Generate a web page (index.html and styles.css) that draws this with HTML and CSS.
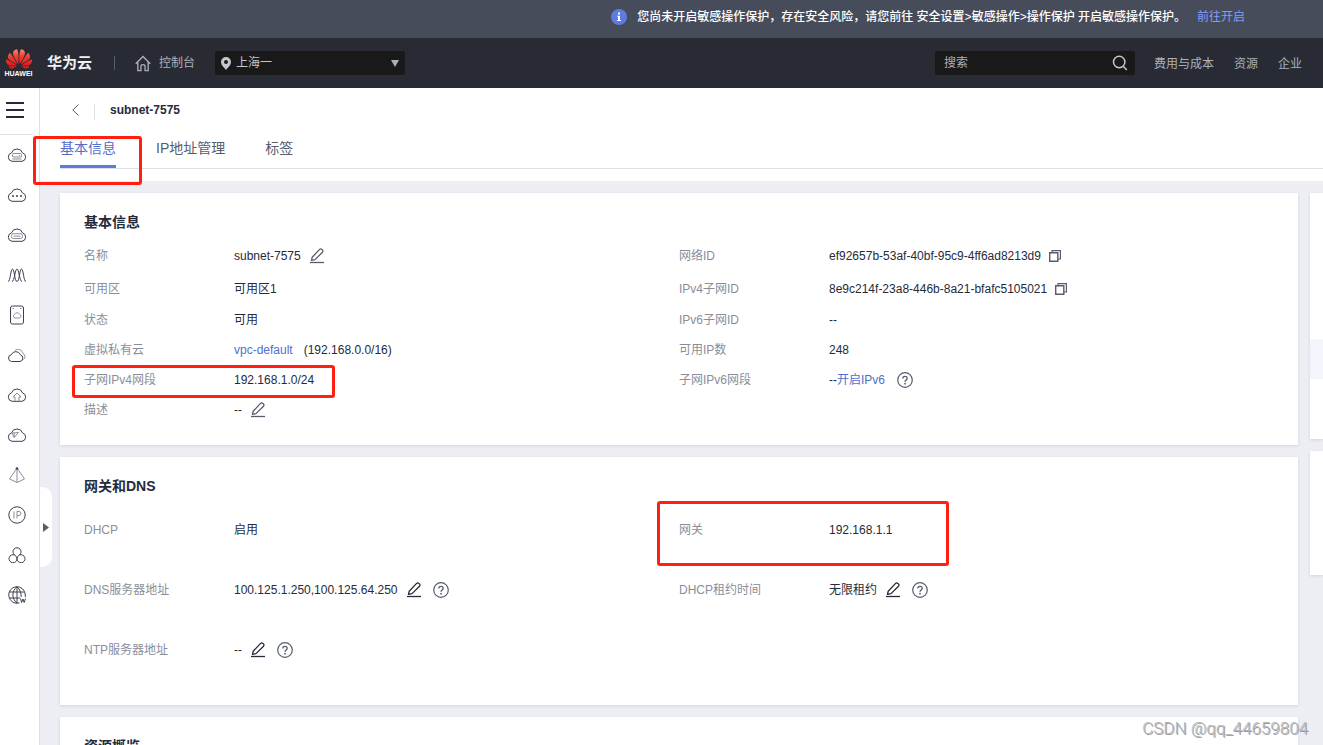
FILE: index.html
```html
<!DOCTYPE html>
<html lang="zh-CN">
<head>
<meta charset="utf-8">
<title>subnet-7575</title>
<link rel="stylesheet" href="styles.css">
</head>
<body>
<svg class="sprite" aria-hidden="true">
  <symbol id="pencil" viewBox="0 0 14 16"><path d="M1.5 12.3 2.2 9.2 9.6 1.4Q10.7.4 11.9 1.4L12.4 1.9Q13.5 3 12.5 4.2L5 11.6Z" fill="none" stroke="currentColor" stroke-width="1.3" stroke-linejoin="round"/><path d="M0 14.5H14" stroke="currentColor" stroke-width="1.3"/></symbol>
  <symbol id="help" viewBox="0 0 16 16"><circle cx="8" cy="8" r="7.3" fill="none" stroke="currentColor" stroke-width="1.2"/><path d="M5.8 6.6C5.8 3.6 10.2 3.7 10.2 6.3 10.2 8 8 8 8 9.8" fill="none" stroke="currentColor" stroke-width="1.3"/><circle cx="8" cy="11.7" r=".9" fill="currentColor"/></symbol>
  <symbol id="copy" viewBox="0 0 12 12"><path d="M.7 2.7H8.8V11.2H.7Z" fill="none" stroke="currentColor" stroke-width="1.4"/><path d="M3 2.500V.7H11.400V9H9" fill="none" stroke="currentColor" stroke-width="1.2"/></symbol>
  <symbol id="cloud" viewBox="0 0 20 16"><path d="M5 14.300H15A4.300 4.300 0 0 0 15.500 5.900 5.800 5.800 0 0 0 4.500 5.900 4.300 4.300 0 0 0 5 14.300Z"/></symbol>
</svg>

<div class="banner" role="status">
  <svg class="banner-icon" viewBox="0 0 16 16" aria-hidden="true"><circle cx="8" cy="8" r="8" fill="#5e7ce0"/><path d="M7 3.5h2v2H7zM6.2 6.7H9V11h1v1H6v-1h1V7.7h-.8z" fill="#fff"/></svg>
  <span>您尚未开启敏感操作保护，存在安全风险，请您前往 安全设置&gt;敏感操作&gt;操作保护 开启敏感操作保护。</span>
  <a class="banner-link" href="#">前往开启</a>
</div>

<header class="topbar">
  <a class="logo" href="#" aria-label="华为云">
    <span class="logo-mark">
      <svg class="logo-flower" viewBox="0 2.9 24 18.2" aria-hidden="true"><defs><linearGradient id="petal" x1="0" y1="0" x2="0" y2="1"><stop offset="0" stop-color="#f58a68"/><stop offset=".4" stop-color="#ee3a30"/><stop offset="1" stop-color="#cf1820"/></linearGradient></defs><path fill="url(#petal)" d="M3.67 6.14S1.82 7.91 1.72 9.78v.35c.08 1.51 1.22 2.4 1.22 2.4 1.83 1.79 6.26 4.04 7.3 4.55 0 0 .06.03.1-.01l.02-.04v-.04C7.52 10.8 3.67 6.14 3.67 6.14zM9.65 18.6c-.02-.08-.1-.08-.1-.08l-7.38.26c.8 1.43 2.15 2.53 3.56 2.2.96-.25 3.16-1.78 3.88-2.3.06-.05.04-.09.04-.09zm.08-.78C6.49 15.63.21 12.28.21 12.28c-.15.46-.2.9-.21 1.3v.07c0 1.07.4 1.82.4 1.82.8 1.69 2.34 2.2 2.34 2.2.7.3 1.4.31 1.4.31.12.02 4.4 0 5.54 0 .05 0 .08-.05.08-.05v-.06c0-.03-.03-.05-.03-.05zM9.06 3.19a3.42 3.42 0 00-2.57 3.15v.41c.03.6.16 1.05.16 1.05.66 2.9 3.86 7.65 4.55 8.65.05.05.1.03.1.03a.1.1 0 00.06-.1c1.06-10.6-1.11-13.42-1.11-13.42-.32.02-1.19.23-1.19.23zm8.299 2.27s-.49-1.8-2.44-2.28c0 0-.57-.14-1.17-.22 0 0-2.18 2.81-1.12 13.43.01.07.06.08.06.08.07.03.1-.03.1-.03.72-1.03 3.9-5.76 4.55-8.64 0 0 .36-1.4.02-2.34zm-2.92 13.07s-.07 0-.09.05c0 0-.01.07.03.1.7.51 2.85 2 3.88 2.3 0 0 .16.05.43.06h.14c.69-.02 1.9-.37 3-2.26l-7.4-.25zm7.83-8.41c.14-2.06-1.94-3.97-1.94-3.98 0 0-3.85 4.66-6.67 10.8 0 0-.03.08.02.13l.04.01h.06c1.06-.53 5.46-2.77 7.28-4.54 0 0 1.15-.93 1.21-2.42zm1.52 2.14s-6.28 3.37-9.52 5.55c0 0-.05.04-.03.11 0 0 .03.06.07.06 1.16 0 5.56 0 5.67-.02 0 0 .57-.02 1.27-.29 0 0 1.56-.5 2.37-2.27 0 0 .73-1.45.17-3.14z"/></svg>
      <span class="logo-word">HUAWEI</span>
    </span>
    <span class="logo-name">华为云</span>
  </a>
  <span class="divider"></span>
  <a class="home" href="#">
    <svg class="home-icon" viewBox="0 0 17 17" fill="none" stroke="currentColor" stroke-width="1.4" aria-hidden="true"><path d="M.8 8.8 8.5 1 16.2 8.8M3 7V16H6.3V11.5Q6.3 9.6 8.5 9.6T10.7 11.5V16H14V7"/></svg>
    <span>控制台</span>
  </a>
  <div class="region">
    <svg class="pin" viewBox="0 0 10 13" aria-hidden="true"><path d="M5 0A5 5 0 0 0 0 5C0 8 3 10.500 5 13 7 10.500 10 8 10 5A5 5 0 0 0 5 0ZM5 3A2 2 0 1 1 5 7 2 2 0 0 1 5 3Z" fill="#c4c7ce" fill-rule="evenodd"/></svg>
    <select class="region-select" aria-label="区域"><option>上海一</option></select>
    <svg class="caret" viewBox="0 0 8 7" aria-hidden="true"><path d="M0 0H8L4 7Z" fill="#adb0b8"/></svg>
  </div>
  <div class="search">
    <input class="search-input" type="text" placeholder="搜索" aria-label="搜索">
    <button class="search-button" type="button" aria-label="搜索"><svg class="search-icon" viewBox="0 0 16 16" fill="none" stroke="#c4c7ce" stroke-width="1.5" aria-hidden="true"><circle cx="7.200" cy="7" r="5.700"/><path d="M11.200 11.200 14.800 15"/></svg></button>
  </div>
  <nav class="top-links"><a href="#">费用与成本</a><a href="#">资源</a><a href="#">企业</a></nav>
</header>

<div class="shell">
  <aside class="sidebar">
    <button class="menu" type="button" aria-label="菜单"><span class="bar"></span><span class="bar"></span><span class="bar"></span></button>
    <nav class="services">
      <a href="#" aria-label="云服务器"><svg class="service" viewBox="0 0 20 16"><use href="#cloud"/><g class="thin"><rect x="5.500" y="6.500" width="9" height="3.500" rx="1"/><path d="M5.500 12H14.500M12 8.300h1"/></g></svg></a>
      <a href="#" aria-label="云服务"><svg class="service" viewBox="0 0 20 16"><use href="#cloud"/><g class="solid"><circle cx="6" cy="9" r="1"/><circle cx="10" cy="9" r="1"/><circle cx="14" cy="9" r="1"/></g></svg></a>
      <a href="#" aria-label="裸金属"><svg class="service" viewBox="0 0 20 16"><use href="#cloud"/><g class="thin"><rect x="4.500" y="6.700" width="11" height="4.800" rx="2"/><path d="M6.500 9.100H13.500"/></g></svg></a>
      <a href="#" aria-label="弹性伸缩"><svg class="service" viewBox="0 0 20 16"><path d="M1 14.500C3.500 14.500 3.500 2 5.500 2S7.500 14.500 10 14.500 12.500 2 14.500 2 16.500 14.500 19 14.500M5 14.500C7.500 14.500 8 2 10 2S12.500 14.500 15 14.500"/></svg></a>
      <a href="#" aria-label="云硬盘"><svg class="service tall" viewBox="0 0 20 20"><rect x="3.500" y="1" width="13" height="18" rx="2"/><path class="thin" d="M8 13H12.500A1.900 1.900 0 0 0 12.700 9.400 2.800 2.800 0 0 0 7.600 9.400 1.900 1.900 0 0 0 8 13ZM5.500 3.500h1.500M13 3.500h1.500"/></svg></a>
      <a href="#" aria-label="备份"><svg class="service" viewBox="0 0 20 16"><path d="M4.500 14.500H13A3.500 3.500 0 0 0 13.300 7.700 4.800 4.800 0 0 0 4.400 7.600 3.500 3.500 0 0 0 4.500 14.500Z"/><path class="thin" d="M8 3.500A5 5 0 0 1 16 6.500 3.500 3.500 0 0 1 16.500 12.500"/></svg></a>
      <a href="#" aria-label="上传"><svg class="service" viewBox="0 0 20 16"><use href="#cloud"/><path class="thin" d="M8 14V10H6L10 6 14 10H12V14"/></svg></a>
      <a href="#" aria-label="对象存储"><svg class="service" viewBox="0 0 20 16"><use href="#cloud"/><path class="thin" d="M5 6 11.500 5.500 7.200 10.500ZM7.200 10.500V6"/></svg></a>
      <a href="#" aria-label="负载均衡"><svg class="service" viewBox="0 0 20 16"><path class="thin" d="M10 1 2.500 12 10 15.500 17.500 12ZM10 1V15.500"/><circle class="solid" cx="10" cy="1.500" r="1.300"/></svg></a>
      <a href="#" aria-label="弹性公网IP"><svg class="service tall" viewBox="0 0 20 20"><circle cx="10" cy="10" r="8.200"/><path class="thin" d="M7 6.500V13.500M10 13.500V6.500H12Q14 6.700 14 8.500T12 10.500H10"/></svg></a>
      <a href="#" aria-label="容器"><svg class="service" viewBox="0 0 20 16"><path d="M7.700 8A4 4 0 1 1 12.300 8M10 11.500A4 4 0 1 1 7.700 8.100Q9.500 9 10 11.500A4 4 0 1 0 12.300 8.100Q10.500 9 10 11.500"/></svg></a>
      <a href="#" aria-label="域名"><svg class="service tall" viewBox="0 0 20 20"><path d="M12.500 17.900A8.300 8.300 0 1 1 18.300 10V12M10 1.800V18M10 1.800C4.500 6 4.500 14 10 18M10 1.800Q14.300 5.500 14.200 12M2.500 7H17.500M2.500 13H13"/><path d="M13.500 13.500 14.600 17.500 15.900 14 17.200 17.500 18.500 13.500"/></svg></a>
    </nav>
  </aside>

  <main class="main">
    <div class="page-head">
      <div class="title-row">
        <button class="back" type="button" aria-label="返回"><svg class="back-icon" viewBox="0 0 7 12"><path d="M6.500.5.800 6 6.500 11.500" fill="none" stroke="#575d6c"/></svg></button>
        <span class="title-divider"></span>
        <h1 class="title">subnet-7575</h1>
      </div>
      <div class="tabs" role="tablist">
        <button class="tab active" type="button" role="tab" aria-selected="true">基本信息</button>
        <button class="tab" type="button" role="tab">IP地址管理</button>
        <button class="tab" type="button" role="tab">标签</button>
      </div>
    </div>

    <div class="content">
      <div class="primary">
        <section class="card">
          <h2 class="card-title">基本信息</h2>
          <div class="columns">
            <dl class="fields">
              <div class="row"><dt>名称</dt><dd>subnet-7575<button class="icon-button" type="button" aria-label="编辑"><svg class="pencil soft"><use href="#pencil"/></svg></button></dd></div>
              <div class="row"><dt>可用区</dt><dd>可用区1</dd></div>
              <div class="row"><dt>状态</dt><dd>可用</dd></div>
              <div class="row"><dt>虚拟私有云</dt><dd><a href="#">vpc-default</a><span class="cidr">(192.168.0.0/16)</span></dd></div>
              <div class="row"><dt>子网IPv4网段</dt><dd>192.168.1.0/24</dd></div>
              <div class="row"><dt>描述</dt><dd>--<button class="icon-button" type="button" aria-label="编辑"><svg class="pencil soft"><use href="#pencil"/></svg></button></dd></div>
            </dl>
            <dl class="fields">
              <div class="row"><dt>网络ID</dt><dd>ef92657b-53af-40bf-95c9-4ff6ad8213d9<button class="icon-button tight" type="button" aria-label="复制"><svg class="copy"><use href="#copy"/></svg></button></dd></div>
              <div class="row"><dt>IPv4子网ID</dt><dd>8e9c214f-23a8-446b-8a21-bfafc5105021<button class="icon-button tight" type="button" aria-label="复制"><svg class="copy"><use href="#copy"/></svg></button></dd></div>
              <div class="row"><dt>IPv6子网ID</dt><dd>--</dd></div>
              <div class="row"><dt>可用IP数</dt><dd>248</dd></div>
              <div class="row"><dt>子网IPv6网段</dt><dd>--<a href="#">开启IPv6</a><button class="icon-button wide" type="button" aria-label="帮助"><svg class="help"><use href="#help"/></svg></button></dd></div>
            </dl>
          </div>
        </section>

        <section class="card roomy">
          <h2 class="card-title">网关和DNS</h2>
          <div class="columns">
            <dl class="fields">
              <div class="row"><dt>DHCP</dt><dd>启用</dd></div>
              <div class="row"><dt>DNS服务器地址</dt><dd>100.125.1.250,100.125.64.250<button class="icon-button" type="button" aria-label="编辑"><svg class="pencil"><use href="#pencil"/></svg></button><button class="icon-button wide" type="button" aria-label="帮助"><svg class="help"><use href="#help"/></svg></button></dd></div>
              <div class="row"><dt>NTP服务器地址</dt><dd>--<button class="icon-button" type="button" aria-label="编辑"><svg class="pencil"><use href="#pencil"/></svg></button><button class="icon-button wide" type="button" aria-label="帮助"><svg class="help"><use href="#help"/></svg></button></dd></div>
            </dl>
            <dl class="fields">
              <div class="row"><dt>网关</dt><dd>192.168.1.1</dd></div>
              <div class="row"><dt>DHCP租约时间</dt><dd>无限租约<button class="icon-button" type="button" aria-label="编辑"><svg class="pencil"><use href="#pencil"/></svg></button><button class="icon-button wide" type="button" aria-label="帮助"><svg class="help"><use href="#help"/></svg></button></dd></div>
            </dl>
          </div>
        </section>

        <section class="card">
          <h2 class="card-title">资源概览</h2>
        </section>
      </div>
      <div class="secondary">
        <section class="side-card diagram"><div class="band"></div></section>
        <section class="side-card summary"></section>
      </div>
    </div>
    <button class="expander" type="button" aria-label="展开"><svg class="expander-icon" viewBox="0 0 6 9"><path d="M0 0 6 4.500 0 9Z" fill="#575d6c"/></svg></button>
  </main>
</div>

<div class="mark mark-tab"></div>
<div class="mark mark-cidr"></div>
<div class="mark mark-gateway"></div>
<div class="watermark">CSDN @qq_44659804</div>
</body>
</html>
```

FILE: styles.css
```css
* { box-sizing: border-box; }

body {
  position: relative;
  display: flex;
  flex-direction: column;
  height: 100vh;
  margin: 0;
  overflow: hidden;
  background: #edeef4;
  color: #252b3a;
  font: 12px/20px "Liberation Sans", "Noto Sans CJK SC", sans-serif;
}

a { color: #526ecc; text-decoration: none; }
button { padding: 0; border: 0; background: none; color: inherit; font: inherit; cursor: pointer; }
svg { display: block; flex: none; }
h1, h2, dl, dd { margin: 0; }
.sprite { position: absolute; width: 0; height: 0; }

/* Notice */
.banner {
  display: flex;
  flex: none;
  align-items: center;
  justify-content: flex-end;
  height: 38px;
  padding: 0 78px 4px 20px;
  background: #464c59;
  color: #fff;
  font-weight: 500;
  white-space: nowrap;
}
.banner-icon { width: 16px; height: 16px; margin-right: 10px; }
.banner-link { margin-left: 11px; color: #859bff; font-weight: 400; }

/* Top bar */
.topbar {
  display: flex;
  flex: none;
  align-items: center;
  height: 50px;
  padding: 0 21px 0 5px;
  background: #282b33;
  color: #adb0b8;
  white-space: nowrap;
}
.topbar a { color: inherit; }
.logo { display: flex; align-items: center; gap: 15px; }
.logo-mark { display: flex; flex-direction: column; align-items: center; width: 27px; }
.logo-flower { width: 26px; height: 20px; }
.logo-word { color: #fff; font-size: 7px; font-weight: 700; line-height: 9px; }
.topbar .logo-name { color: #f0f0f2; font-size: 15px; font-weight: 700; }
.divider { width: 1px; height: 14px; margin: 0 20px 0 22px; background: #575d6c; }
.home { display: flex; align-items: center; gap: 8px; margin-right: 20px; }
.home-icon { width: 16px; height: 17px; }
.region {
  display: grid;
  grid-template-columns: 190px;
  align-items: center;
  height: 24px;
  border-radius: 2px;
  background: #191919;
}
.region > * { grid-area: 1 / 1; }
.pin { width: 10px; height: 13px; margin-left: 6px; pointer-events: none; }
.caret { width: 8px; height: 7px; margin-right: 6px; justify-self: end; pointer-events: none; }
.region-select {
  width: 100%;
  height: 24px;
  padding: 0 20px 0 21px;
  border: 0;
  appearance: none;
  background: transparent;
  color: #c4c7ce;
  font: inherit;
}
.search { display: flex; width: 200px; height: 24px; margin-left: auto; border-radius: 2px; background: #191919; }
.search-input {
  flex: 1;
  min-width: 0;
  padding: 0 9px;
  border: 0;
  background: transparent;
  color: #c4c7ce;
  font: inherit;
}
.search-input::placeholder { color: #adb0b8; opacity: 1; }
.search-button { padding-right: 7px; }
.search-icon { width: 16px; height: 16px; }
.top-links { display: flex; gap: 20px; margin-left: 19px; padding-top: 2px; }

/* Service rail */
.shell { display: flex; flex: 1; min-height: 0; }
.sidebar { flex: none; width: 40px; border-right: 1px solid #dfe1e6; background: #fff; }
.menu {
  display: flex;
  flex-direction: column;
  gap: 5px;
  width: 33px;
  height: 47px;
  padding: 14px 9px 0 6px;
  border-bottom: 1px solid #dfe1e6;
}
.bar { height: 2px; background: #252b3a; }
.services a { display: flex; align-items: center; height: 40px; padding-left: 7px; }
.service { width: 20px; height: 16px; fill: none; stroke: #3b4150; stroke-width: 1; }
.service.tall { height: 20px; }
.thin { stroke: #8a8e99; stroke-width: 1; }
.solid { fill: #3b4150; stroke: none; }

/* Page */
.main { position: relative; flex: 1; min-width: 0; }
.page-head { height: 93px; padding-left: 20px; background: #fff; }
.title-row { display: flex; align-items: center; height: 44px; padding-left: 12px; }
.back-icon { width: 7px; height: 12px; }
.title-divider { width: 1px; height: 16px; margin: 3px 15px 0; background: #dfe1e6; }
.title { font-size: 12px; font-weight: 700; }
.tabs { display: flex; gap: 40px; border-bottom: 1px solid #dfe1e6; }
.tab { padding-bottom: 1px; border-bottom: 3px solid transparent; color: #575d6c; font-size: 14px; line-height: 32px; }
.tab.active { border-color: #5e7ce0; color: #526ecc; }

.content { display: flex; gap: 12px; padding: 12px 0 0 20px; }
.primary { display: flex; flex: 1; flex-direction: column; gap: 12px; min-width: 0; }
.secondary { display: flex; flex: none; flex-direction: column; gap: 12px; width: 13px; }
.card, .side-card { background: #fff; box-shadow: 0 1px 3px rgba(37, 43, 58, 0.12); }
.card { padding: 19px 24px 20px; }
.card-title { margin-bottom: 7px; font-size: 14px; font-weight: 700; line-height: 20px; }
.columns { display: grid; grid-template-columns: 1fr 1fr; }
.row { display: flex; align-items: center; height: 30px; }
.row:nth-child(1) { height: 34px; }
.row:nth-child(2) { height: 32px; }
.row dt { flex: none; width: 150px; color: #8a8e99; }
.row dd { display: flex; align-items: center; white-space: nowrap; }
.cidr { margin-left: 11px; }
.roomy { padding-bottom: 25px; }
.roomy .card-title { margin-bottom: 4px; }
.roomy .row { height: 60px; }
.icon-button { margin-left: 9px; color: #575d6c; }
.icon-button.wide { margin-left: 12px; }
.icon-button.tight { margin-left: 8px; }
.pencil { width: 14px; height: 16px; color: #252b3a; }
.pencil.soft { color: #575d6c; }
.help { width: 16px; height: 16px; }
.copy { width: 12px; height: 12px; }
.diagram { height: 246px; padding-top: 146px; }
.band { height: 40px; background: #f2f5fc; }
.summary { height: 124px; }

.expander {
  position: absolute;
  top: 399px;
  left: 0;
  display: flex;
  align-items: center;
  width: 12px;
  height: 80px;
  padding-left: 3px;
  border-radius: 0 10px 10px 0;
  background: #fff;
}
.expander-icon { width: 6px; height: 9px; }

/* Highlights laid over the page */
.mark { position: absolute; border: 3px solid #ff2012; border-radius: 3px; pointer-events: none; }
.mark-tab { top: 136px; left: 33px; width: 109px; height: 49px; }
.mark-cidr { top: 365px; left: 72px; width: 263px; height: 33px; }
.mark-gateway { top: 501px; left: 657px; width: 292px; height: 65px; }
.watermark {
  position: absolute;
  right: 15px;
  bottom: 7px;
  color: #b4b6ba;
  font-family: Roboto, "Liberation Sans", sans-serif;
  font-size: 17px;
  font-weight: 300;
  text-shadow: 1px 1px 0 #999;
}
```
